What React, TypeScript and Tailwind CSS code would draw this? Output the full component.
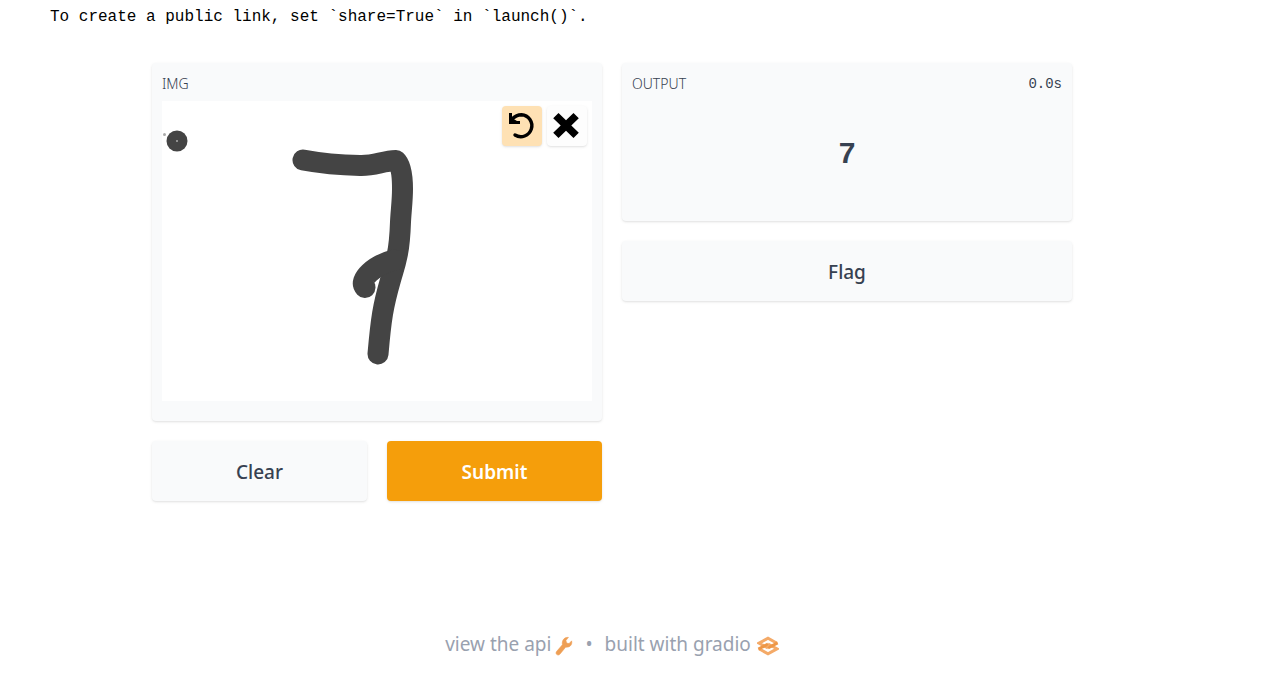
import React from "react";

const sans = "font-['Noto_Sans',sans-serif]";

function UndoIcon() {
  return (
    <svg viewBox="0 0 40 40" className="size-10" fill="none" stroke="#000" aria-hidden="true">
      <path d="M10 13C13 10 16 8.700 19.500 8.700A11 11 0 1 1 13 29" strokeWidth="3.400" strokeLinecap="round" />
      <path d="M7 7H10V12L15 15H18V18H7Z" fill="#000" stroke="none" />
    </svg>
  );
}

function CrossIcon() {
  return (
    <svg viewBox="0 0 40 40" className="size-10" aria-hidden="true">
      <path
        d="M11.500 7L19 14.200L26.500 7L31.800 12.200L24.300 19.500L31.800 26.800L26.500 32L19 24.800L11.500 32L6.200 26.800L13.700 19.500L6.200 12.200Z"
        fill="#000"
      />
    </svg>
  );
}

function WrenchIcon() {
  return (
    <svg viewBox="0 0 20 22" className="mt-[3px] h-[22px] w-[18px]" aria-hidden="true">
      <path
        d="M15 1.400L12.200 4.800L12.900 7.700L15.600 8.300L18.500 5.300C19.400 8.500 17.800 11.500 14.600 12.200C13.500 12.400 12.700 12.300 11.800 12.300L5.600 20C4.600 21.300 3 21.300 2 20.500C0.900 19.600 0.900 18 1.900 16.900L8.200 9.600C7.400 5 10.200 0.900 15 1.400Z"
        fill="#ee9f55"
        stroke="#ee9f55"
        strokeWidth="0.600"
      />
    </svg>
  );
}

function GradioLogo() {
  return (
    <svg viewBox="0 0 22 20" className="mt-[3px] h-5 w-[22px]" fill="none" strokeWidth="3" aria-hidden="true">
      <path d="M11 12L2 7.200L11 2.200L20 7.200" stroke="#f4aa68" />
      <path d="M11 8L20 12.800L11 17.800L2 12.800" stroke="#f4aa68" />
      <path d="M20.600 6.900L11 12" stroke="#ee9747" />
      <path d="M1.400 13.100L11 8" stroke="#ee9747" />
    </svg>
  );
}

function Sketch() {
  return (
    <svg viewBox="0 0 430 300" className="block w-full" fill="none" role="img" aria-label="Handwritten digit">
      <g stroke="#444" strokeWidth="21" strokeLinecap="round" strokeLinejoin="round">
        <path d="M141 59C157 62 173 64 198 64.500C213 65 220 60 234 59.500C239 64 240.500 75 240.500 88C240.500 100 239 110 238.500 121C238 136 237.500 144 235 155C233 165 231 170 228.500 179C221 205 219 218 216 253" />
        <path d="M232 159C212 164 196 179 203 186.500" />
      </g>
      <circle cx="15" cy="40" r="10.500" fill="#444" />
      <circle cx="15" cy="40" r="1" fill="#aaa" />
      <circle cx="2.500" cy="33.500" r="1.500" fill="#aaa" />
    </svg>
  );
}

export default function App() {
  return (
    <div className={`bg-white text-[#374151] ${sans}`}>
      <p className="pt-[5px] pl-[50px] font-['Liberation_Mono',monospace] text-base leading-6 text-black">
        To create a public link, set `share=True` in `launch()`.
      </p>
      <div className="pt-[34px] pr-16">
        <main className="mx-auto grid max-w-[920px] grid-cols-2 items-start gap-5">
          <section className="flex flex-col gap-5">
            <div className="rounded bg-gray-50 px-2.5 pt-[11px] pb-5 shadow-sm">
              <h2 className="pb-[7px] text-sm leading-5 font-light">IMG</h2>
              <div className="relative bg-white">
                <Sketch />
                <div className="absolute top-[5px] right-[5px] flex gap-[5px]">
                  <button aria-label="Undo" className="rounded bg-[#fee1b4] shadow-sm">
                    <UndoIcon />
                  </button>
                  <button aria-label="Clear drawing" className="rounded bg-[#fdfdfd] shadow-sm">
                    <CrossIcon />
                  </button>
                </div>
              </div>
            </div>
            <div className="grid grid-cols-2 gap-5">
              <button className="rounded bg-gray-50 pt-[17px] pb-[15px] text-[19px] leading-7 font-medium shadow-sm">
                Clear
              </button>
              <button className="rounded bg-[#f59e0b] pt-[17px] pb-[15px] text-[19px] leading-7 font-semibold text-white shadow-sm">
                Submit
              </button>
            </div>
          </section>
          <section className="flex flex-col gap-5">
            <div className="rounded bg-gray-50 px-2.5 pt-[11px] pb-[9px] shadow-sm">
              <div className="flex justify-between text-sm leading-5">
                <h2 className="font-light">OUTPUT</h2>
                <span className="font-['Liberation_Mono',monospace]">0.0s</span>
              </div>
              <output className="flex h-[118px] items-center justify-center font-['Liberation_Sans',sans-serif] text-3xl font-bold">
                7
              </output>
            </div>
            <button className="rounded bg-gray-50 pt-[17px] pb-[15px] text-[19px] leading-7 font-medium shadow-sm">
              Flag
            </button>
          </section>
        </main>
        <footer className="flex items-center justify-center gap-3 pt-[129px] pb-4 text-[19px] leading-7 text-gray-400">
          <a href="#api" className="flex items-center gap-1">
            view the api
            <WrenchIcon />
          </a>
          <span>•</span>
          <a href="#gradio" className="flex items-center gap-1.5">
            built with gradio
            <GradioLogo />
          </a>
        </footer>
      </div>
    </div>
  );
}
